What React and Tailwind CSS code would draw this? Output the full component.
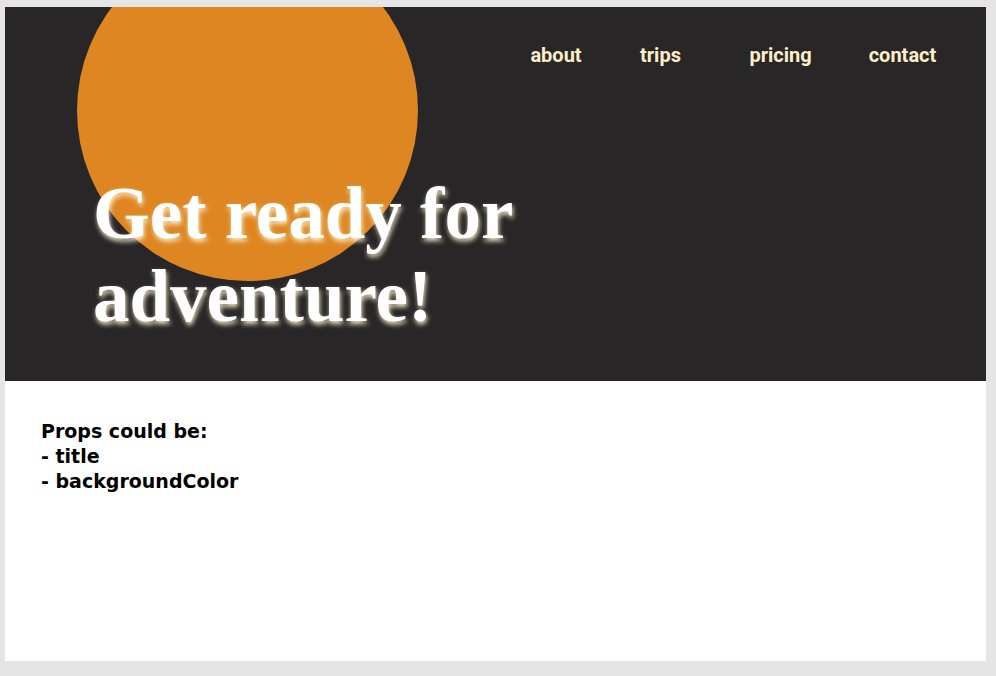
export default function App() {
  const links = [
    { label: "about", cls: "w-[52px]" },
    { label: "trips", cls: "w-[41px] ml-[58px]" },
    { label: "pricing", cls: "w-[63px] ml-[68px]" },
    { label: "contact", cls: "w-[69px] ml-[56px]" },
  ];

  return (
    <div className="w-[996px] h-[676px] bg-[#e5e5e5] pt-[7px] pl-[5px] overflow-hidden">
      <div className="w-[981px] h-[654px] bg-white flex flex-col">
        {/* header */}
        <header className="relative h-[374px] bg-[#282627] overflow-hidden">
          <div className="absolute left-[72px] top-[-67px] w-[341px] h-[341px] rounded-full bg-[#de8722]" />
          <nav className="relative flex justify-end pr-[49px] pt-[33px] font-['Roboto',sans-serif] font-bold text-[20px] text-[#fcefc8]">
            {links.map((l) => (
              <a key={l.label} className={`${l.cls} text-center`}>
                {l.label}
              </a>
            ))}
          </nav>
          <h1
            className="relative mt-[102px] ml-[88px] font-['Liberation_Serif',serif] font-bold text-[73px] leading-[83px] text-white"
            style={{ textShadow: "1px 3px 5px rgba(255,244,210,0.95)" }}
          >
            Get ready for
            <br />
            adventure!
          </h1>
        </header>

        {/* notes */}
        <div className="pt-[38px] pl-[36px] font-['DejaVu_Sans',sans-serif] font-bold text-[19px] leading-[25px] text-black">
          <p>Props could be:</p>
          <p>- title</p>
          <p>- backgroundColor</p>
        </div>
      </div>
    </div>
  );
}
